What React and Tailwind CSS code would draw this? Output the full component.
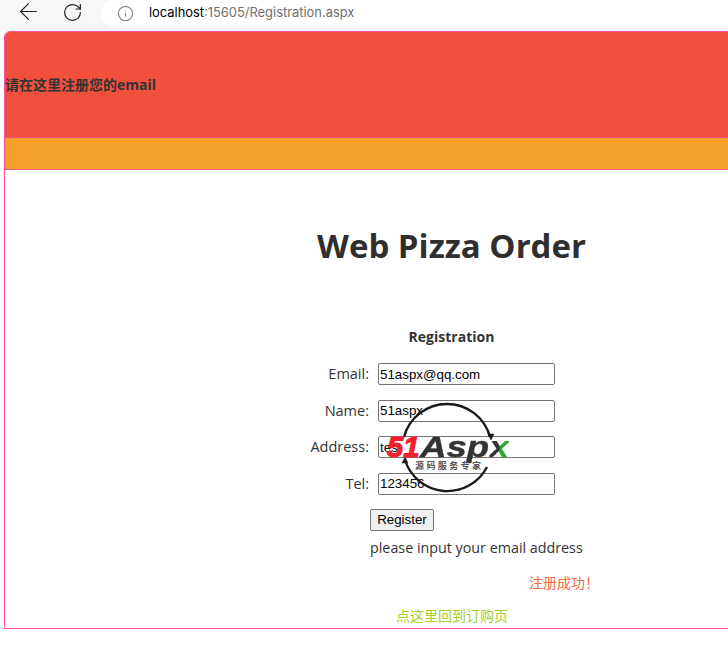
import { ArrowLeft, RotateCw, Info } from "lucide-react";

const FONT = "font-['Open_Sans','Noto_Sans_CJK_SC',sans-serif]";

/* ---------- Browser toolbar ---------- */
function Toolbar() {
  return (
    <div className="h-[31px] bg-[#f7f7f7] flex items-start">
      <ArrowLeft size={27} strokeWidth={1} className="ml-[15px] -mt-[2px] text-[#222]" />
      <RotateCw size={21} strokeWidth={1.4} className="ml-[20px] mt-[2px] text-[#222]" />
      <div className="ml-[18px] flex-1 h-[27px] bg-white rounded-l-[14px] flex items-center pb-[1px] font-['Inter',sans-serif] text-[12.9px]">
        <Info size={17} strokeWidth={1.5} className="ml-[16px] text-[#777]" />
        <span className="ml-[15px] text-black">localhost</span>
        <span className="text-[#6f6f6f]">:15605/Registration.aspx</span>
      </div>
    </div>
  );
}

/* ---------- 51Aspx watermark ---------- */
function Watermark() {
  return (
    <div className="absolute left-[387px] top-[402px] w-[126px] h-[92px]">
      <svg width="126" height="92" viewBox="0 0 126 92" className="absolute inset-0" fill="none" stroke="#1a1a1a" strokeWidth="2.4">
        <path d="M17 35 A44.5 44.5 0 0 1 103 35" />
        <path d="M18 58 A44.5 44.5 0 0 0 100 65" />
        <path d="M101 32 L104 38 L107 32 Z" fill="#1a1a1a" strokeWidth="0.5" />
        <path d="M15 61 L18 55 L21 61 Z" fill="#1a1a1a" strokeWidth="0.5" />
      </svg>
      <div className="absolute left-0 top-[29px] flex items-baseline font-['Liberation_Sans',sans-serif] italic font-bold text-[29px] leading-[32px] whitespace-nowrap">
        <span className="text-[#f0202c] [-webkit-text-stroke:1.2px_#f0202c]">51</span>
        <span className="inline-block ml-[1px] text-[#333] scale-x-[1.26] origin-left [-webkit-text-stroke:0.4px_#333]">
          Asp
          <span className="bg-[linear-gradient(100deg,#333_50%,#2aaa33_55%)] bg-clip-text text-transparent [-webkit-text-stroke:0]">x</span>
        </span>
      </div>
      <div className="absolute left-[28px] top-[58px] text-[9px] leading-[11px] font-bold tracking-[2.4px] text-[#555] whitespace-nowrap font-['Noto_Sans_CJK_SC',sans-serif]">
        源码服务专家
      </div>
    </div>
  );
}

function Field({ label, value }) {
  return (
    <>
      <label className="text-right text-[14.5px] leading-[22px] text-[#333]">{label}:</label>
      <input
        readOnly
        value={value}
        className="w-[177px] h-[22px] border border-[#767676] rounded-[2px] bg-white px-[1px] font-['Liberation_Sans',sans-serif] text-[13.33px] text-black"
      />
    </>
  );
}

export default function App() {
  return (
    <div className={`relative w-[728px] h-[670px] bg-white overflow-hidden ${FONT}`}>
      <Toolbar />

      <div className="ml-[4px] w-[895px] h-[598px] border border-[#ff4fa0] rounded-tl-[6px] overflow-hidden">
        <div className="h-[106px] bg-[#f1503d] flex items-center pl-0 text-[14px] font-bold text-[#333] border-b border-[#f0508a]">
          请在这里注册您的email
        </div>
        <div className="h-[32px] bg-[#f4a02a] border-b border-[#f0508a]" />

        <div className="text-center">
          <h1 className="mt-[54px] h-[44px] text-[33px] leading-[44px] font-bold text-[#2f2f2f]">Web Pizza Order</h1>
          <h2 className="mt-[59px] text-[14px] leading-[20px] font-bold text-[#333]">Registration</h2>
        </div>

        <div className="mt-[16px] grid grid-cols-[364px_177px] gap-x-[9px] gap-y-[14.6px]">
          <Field label="Email" value="51aspx@qq.com" />
          <Field label="Name" value="51aspx" />
          <Field label="Address" value="test" />
          <Field label="Tel" value="123456" />
        </div>

        <div className="ml-[365px] mt-[14px]">
          <button className="block w-[64px] h-[22px] bg-[#efefef] border border-[#767676] rounded-[2px] font-['Liberation_Sans',sans-serif] text-[13.33px] text-black">
            Register
          </button>
          <p className="mt-[7px] text-[14.3px] leading-[20px] text-[#333]">please input your email address</p>
        </div>

        <p className="ml-[524px] mt-[15px] text-[14px] leading-[20px] text-[#f26a3d]">注册成功！</p>
        <p className="ml-[391px] mt-[13px] text-[14px] leading-[20px] text-[#a3cf2a]">点这里回到订购页</p>
      </div>

      <Watermark />
    </div>
  );
}
